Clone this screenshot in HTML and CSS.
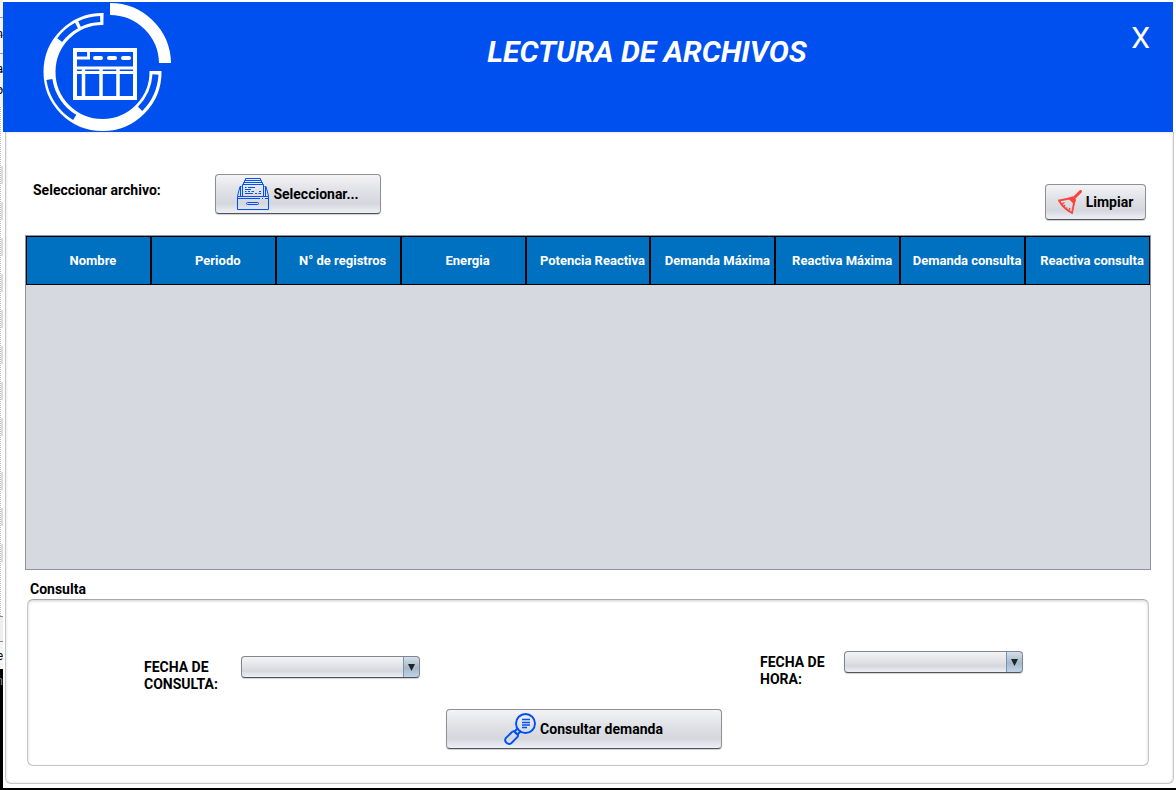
FILE: index.html
```html
<!DOCTYPE html>
<html lang="es">
<head>
<meta charset="utf-8">
<title>Lectura de archivos</title>
<link rel="stylesheet" href="styles.css">
</head>
<body>
<div class="desktop">
  <div class="backdrop">
    <div class="backdrop-bar"><span>n</span><span>a</span><span>o</span></div>
    <div class="backdrop-ruler"></div>
    <div class="backdrop-status"><span>e</span></div>
    <div class="backdrop-dark"><span>n</span></div>
  </div>
  <main class="window">
    <header class="titlebar">
      <svg class="logo" viewBox="40 2 134 130" fill="none" stroke="#fff" aria-hidden="true">
        <path d="M110 9A55 55 0 0 1 165 63" stroke-width="12"/>
        <path d="M103.500 19A53 53 0 1 0 155.500 71" stroke-width="12"/>
        <g stroke="#0050f0" stroke-width="6">
          <path d="M100.200 19A53 53 0 0 0 79.500 24"/>
          <path d="M76.500 25.500A53 53 0 0 0 59.700 40.100"/>
          <path d="M49.400 79.500A53 53 0 0 0 74.700 117.400"/>
          <path d="M140.100 108.800A53 53 0 0 0 155.500 74.500"/>
        </g>
        <rect x="75" y="50" width="60" height="48" stroke-width="4"/>
        <path d="M75 58H90M88.500 50V59.500M75 68H136M75 72.500H136" stroke-width="2.800"/>
        <path d="M83.500 67V98M101 67V98M118 67V98" stroke-width="3.500"/>
        <path d="M95 58H101M109 58H115M123 58H129" stroke-width="4" stroke-linecap="round"/>
      </svg>
      <h1>LECTURA DE ARCHIVOS</h1>
      <button class="close" type="button" aria-label="Cerrar">X</button>
    </header>
    <div class="content">
      <div class="toolbar">
        <label class="toolbar-label" for="pick">Seleccionar archivo:</label>
        <button class="btn btn-pick" id="pick" type="button">
          <svg class="icon-large" viewBox="0 0 32 32" fill="none" stroke="#0050f0" aria-hidden="true">
            <path d="M.500 18.500H31.500V31.500H.500ZM.500 18L3 8.500H4.500M31.500 18L29 8.500H27.500M1 20.500H23M25 20.500H26M28 20.500H31M3.500 9V18M28.500 9V18"/>
            <path d="M5.500 18V6.500H26.500V18M6.500 6V4.500H25.500V6M7.500 4V2.500H24.500V4M8.500 2V.500H23.500V2"/>
            <path d="M8 9.500H9.500M11 9.500H18M8 11.500H14M8 13.500H9.500M11 13.500H13M14.500 13.500H17M8 15.500H16M22 13.500H24M18 15.500H20M21.500 15.500H24"/>
            <rect x="9.500" y="24.500" width="12" height="2" rx="1"/>
          </svg>
          <span>Seleccionar...</span>
        </button>
        <button class="btn btn-clear" type="button">
          <svg class="icon-small" viewBox="0 0 24 24" fill="none" stroke="#f8443a" aria-hidden="true">
            <path d="M22.500 1.500L15.500 8.500" stroke-width="3" stroke-linecap="round"/>
            <path d="M11.500 8.500L14.500 7.500L17 10L16 13Z" fill="#f8443a" stroke-width="2"/>
            <path d="M11.500 8.500L1 10.500Q5 18 14 23L16 13" stroke-width="1.800"/>
            <path d="M3.500 14.500L6.500 12.500M5.500 17L7 15M8 19.500L9 17.500M10.500 21.500L12 18" stroke-width="1.400"/>
          </svg>
          <span>Limpiar</span>
        </button>
      </div>
      <div class="table-pane">
        <table>
          <thead>
            <tr><th>Nombre</th><th>Periodo</th><th>N° de registros</th><th>Energia</th><th>Potencia Reactiva</th><th>Demanda Máxima</th><th>Reactiva Máxima</th><th>Demanda consulta</th><th>Reactiva consulta</th></tr>
          </thead>
        </table>
      </div>
      <section class="query">
        <h2>Consulta</h2>
        <form class="query-box">
          <div class="fields">
            <div class="field field-date">
              <label for="date">FECHA DE<br>CONSULTA:</label>
              <div class="combo"><select id="date"></select></div>
            </div>
            <div class="field">
              <label for="hour">FECHA DE<br>HORA:</label>
              <div class="combo"><select id="hour"></select></div>
            </div>
          </div>
          <button class="btn btn-query" type="button">
            <svg class="icon-large" viewBox="0 0 32 32" fill="none" stroke="#0050f0" stroke-width="1.900" aria-hidden="true">
              <circle cx="21.500" cy="10.500" r="9.500"/>
              <path d="M18 6.500H26M18 9.500H26M18 12H26M18 14.500H23" stroke-width="1.400"/>
              <path d="M10.500 18.500L14 15M13.500 21.500L17 18M10.500 18.500L13.500 21.500"/>
              <path d="M7.500 19.500Q9 17.500 10.500 18.800L13.500 21.500Q14.500 22.500 13.500 24L7.500 30Q5 32 2.500 29.800Q0 27.500 2 24.800Z"/>
            </svg>
            <span>Consultar demanda</span>
          </button>
        </form>
      </section>
    </div>
  </main>
</div>
</body>
</html>
```
FILE: styles.css
```css
* { box-sizing: border-box; }
body {
  margin: 0;
  background: #fff;
  color: #000;
  font: 700 14px/17px Roboto, "Liberation Sans", sans-serif;
}
button, select { font: inherit; color: inherit; }
.desktop {
  display: grid;
  grid-template-columns: 3px minmax(0, 1fr);
  min-height: 100vh;
  border-bottom: 2px solid #000;
}
.backdrop {
  display: flex;
  flex-direction: column;
  overflow: hidden;
  font-weight: 400;
  font-size: 12px;
}
.backdrop span { display: flex; justify-content: flex-end; }
.backdrop-bar {
  display: flex;
  flex-direction: column;
  gap: 4px;
  height: 107px;
  padding-top: 26px;
  background: repeating-linear-gradient(#f2f2f2 0 17px, #999 17px 18px);
}
.backdrop-bar span:first-child { margin-bottom: 14px; }
.backdrop-ruler {
  flex: 1;
  border-left: 1px dotted #bbb;
  background:
    repeating-linear-gradient(#dcdcdc 0 18px, #fff 18px 36px) 0 59px / 3px 288px no-repeat,
    repeating-linear-gradient(#dcdcdc 0 18px, #fff 18px 36px) 0 365px / 3px 108px no-repeat;
}
.backdrop-status {
  height: 53px;
  padding-top: 31px;
  border-top: 1px solid #888;
  background: linear-gradient(#eee 0 24px, #888 24px 25px, #f4f4f4 25px);
}
.backdrop-dark {
  height: 119px;
  padding-top: 4px;
  background: #000;
  color: #888;
}
.window {
  display: flex;
  flex-direction: column;
  padding: 2px 2px 4px 0;
}
.titlebar {
  display: grid;
  grid-template-columns: 171px 1fr 53px;
  height: 130px;
  margin-right: 1px;
  background: #0050f0;
  color: #fff;
}
.logo { width: 134px; height: 130px; margin-left: 37px; }
h1 {
  margin: 0;
  padding-top: 32px;
  text-align: center;
  font: italic 700 30px/36px Roboto, sans-serif;
}
.close {
  justify-self: end;
  align-self: start;
  margin: 18px 23px 0 0;
  padding: 0;
  border: 0;
  background: none;
  font: 400 30px/36px Roboto, sans-serif;
}
.content {
  flex: 1;
  display: flex;
  flex-direction: column;
  margin-left: 2px;
  padding: 42px 22px 17px 19px;
  border: 1px solid #c6c6c6;
  border-top: 0;
  border-radius: 0 0 6px 6px;
  box-shadow: inset 0 0 3px #d8d8d8;
}
.toolbar {
  display: flex;
  align-items: flex-start;
  padding: 0 5px 15px 8px;
}
.toolbar-label { width: 182px; padding-top: 8px; }
.btn {
  display: flex;
  align-items: center;
  justify-content: center;
  gap: 4px;
  padding: 0;
  border: 1px solid #8f9096;
  border-bottom-color: #50535b;
  border-radius: 4px;
  background: linear-gradient(#f4f4f6, #e1e2e7 40%, #d5d7de 75%, #eef0f6);
  box-shadow: 0 1px 1px #d0d0d0;
}
.btn-pick { width: 166px; height: 40px; }
.btn-clear { width: 101px; height: 36px; margin: 10px 0 0 auto; }
.icon-large { width: 32px; height: 32px; }
.icon-small { width: 24px; height: 24px; }
.table-pane {
  flex: 1;
  border: 1px solid #8f949c;
  background: #d6d9e0;
}
table {
  width: 100%;
  table-layout: fixed;
  border-spacing: 0;
}
th {
  height: 49px;
  padding: 0 0 0 9px;
  border: 1px solid #000;
  background: #0070c0;
  color: #fff;
  font-size: 13px;
  text-align: center;
  white-space: nowrap;
}
h2 {
  margin: 0;
  padding: 10px 4px 0 5px;
  font-size: 14px;
  line-height: 19px;
}
.query-box {
  display: flex;
  flex-direction: column;
  align-items: center;
  margin: 0 2px;
  padding: 51px 125px 16px 116px;
  border: 1px solid #c6c6c6;
  border-top-color: #a8a8a8;
  border-radius: 6px;
  box-shadow: inset 0 1px 3px #d0d0d0;
}
.fields {
  display: flex;
  justify-content: space-between;
  align-self: stretch;
}
.field { display: flex; }
.field-date { padding-top: 5px; }
.field label { width: 84px; padding-top: 3px; }
.field-date label { width: 97px; }
.combo { position: relative; width: 179px; height: 22px; }
.combo::after {
  content: "";
  position: absolute;
  right: 5px;
  top: 8px;
  width: 7px;
  height: 7px;
  background: #222;
  clip-path: polygon(0 0, 100% 0, 50% 100%);
  pointer-events: none;
}
select {
  display: block;
  width: 100%;
  height: 22px;
  appearance: none;
  border: 1px solid #83858e;
  border-bottom-color: #50535e;
  border-radius: 4px;
  background:
    linear-gradient(90deg, #7d93a9 0 1px, transparent 1px) right / 16px 100% no-repeat,
    linear-gradient(#d4dfea, #a3b8cb 55%, #bfd4e8) right / 16px 100% no-repeat,
    linear-gradient(#f4f4f6, #dfe1e5 50%, #d5d7de 70%, #eef0f6);
  box-shadow: 0 1px 1px #d0d0d0;
}
.btn-query { width: 276px; height: 40px; margin-top: 16px; }
```
